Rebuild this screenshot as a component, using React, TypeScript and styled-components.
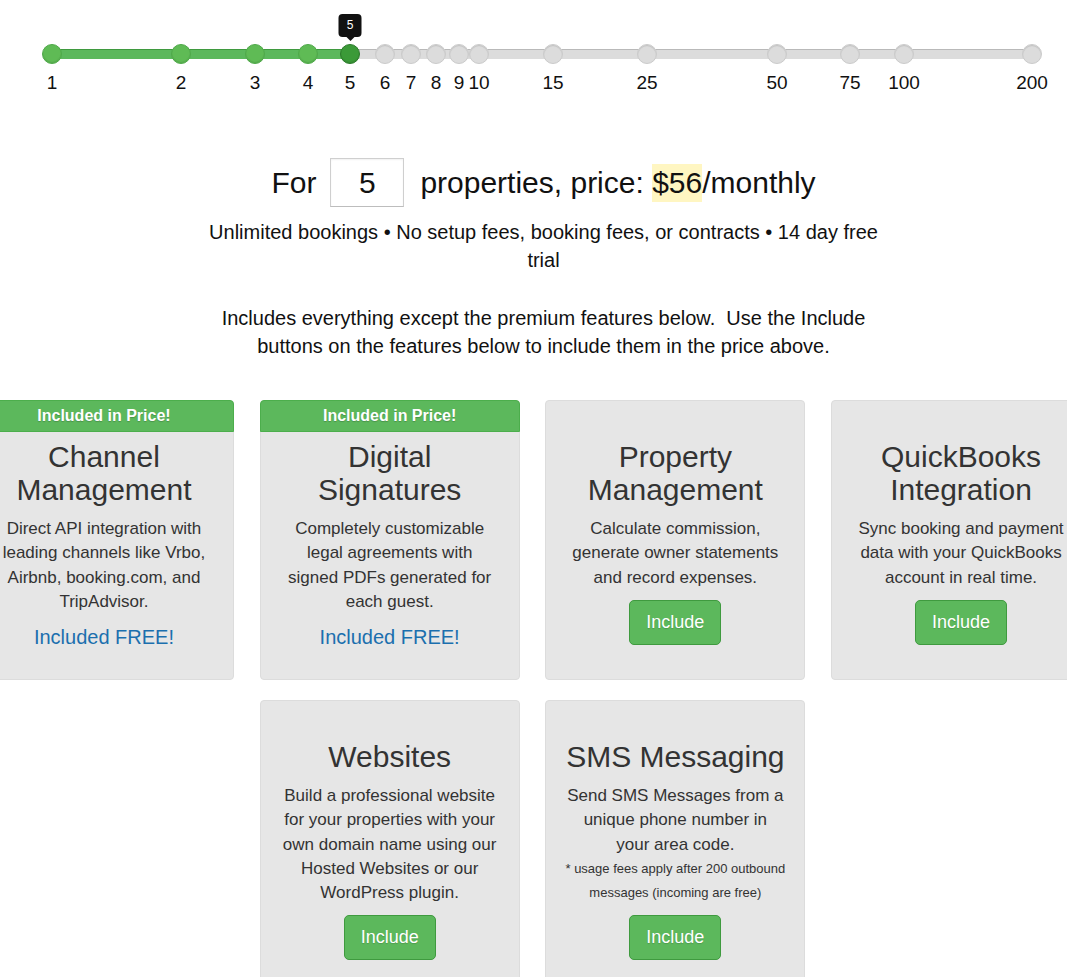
import React from "react";
import styled, { createGlobalStyle } from "styled-components";

const GlobalStyle = createGlobalStyle`
  html, body { margin: 0; padding: 0; background: #fff; overflow-x: hidden; }
  body { font-family: "Liberation Sans", Arial, sans-serif; color: #222; }
  * { box-sizing: border-box; }
`;

const TRACK_LEFT = 52;
const TRACK_RIGHT = 1032;
const TRACK_WIDTH = TRACK_RIGHT - TRACK_LEFT;

const stops: { v: number; x: number }[] = [
  { v: 1, x: 52 },
  { v: 2, x: 181 },
  { v: 3, x: 255 },
  { v: 4, x: 308 },
  { v: 5, x: 350 },
  { v: 6, x: 385 },
  { v: 7, x: 411 },
  { v: 8, x: 436 },
  { v: 9, x: 459 },
  { v: 10, x: 479 },
  { v: 15, x: 553 },
  { v: 25, x: 647 },
  { v: 50, x: 777 },
  { v: 75, x: 850 },
  { v: 100, x: 904 },
  { v: 200, x: 1032 },
];

const SELECTED = 5;

const pct = (x: number) => ((x - TRACK_LEFT) / TRACK_WIDTH) * 100;

const SliderWrap = styled.div`
  width: 1067px;
  padding: 49px ${1067 - TRACK_RIGHT}px 0 ${TRACK_LEFT}px;
`;

const Track = styled.div`
  position: relative;
  height: 10px;
  border-radius: 5px;
  background: #dcdcdc;
  box-shadow: inset 0 1px 0 #b9b9b9;
`;

const Fill = styled.div`
  position: absolute;
  left: 0;
  top: 0;
  bottom: 0;
  border-radius: 5px 0 0 5px;
  background: #5cb85c;
  box-shadow: inset 0 1px 0 #3f9a3f;
`;

const Knob = styled.div<{ $state: "on" | "active" | "off" }>`
  position: absolute;
  top: 50%;
  width: 20px;
  height: 20px;
  margin: -10px 0 0 -10px;
  border-radius: 50%;
  background: ${(p) =>
    p.$state === "active" ? "#3b9a38" : p.$state === "on" ? "#5fbb55" : "#dcdcdc"};
  border: 1px solid
    ${(p) =>
      p.$state === "active" ? "#2b7a2a" : p.$state === "on" ? "#4fa94a" : "#cbcbcb"};
  box-shadow: ${(p) =>
    p.$state === "off" ? "inset 0 1px 1px rgba(0,0,0,0.12)" : "inset 0 -1px 1px rgba(0,0,0,0.1)"};
`;

const Tip = styled.div`
  position: absolute;
  bottom: 26px;
  left: 50%;
  transform: translateX(-50%);
  min-width: 23px;
  height: 23px;
  padding: 0 4px;
  border-radius: 4px;
  background: #111;
  color: #fff;
  font-size: 12px;
  line-height: 23px;
  text-align: center;
  &::after {
    content: "";
    position: absolute;
    left: 50%;
    bottom: -4px;
    margin-left: -4px;
    border-left: 4px solid transparent;
    border-right: 4px solid transparent;
    border-top: 4px solid #111;
  }
`;

const Labels = styled.div`
  position: relative;
  height: 22px;
  margin-top: 13px;
`;

const Label = styled.span`
  position: absolute;
  top: 0;
  transform: translateX(-50%);
  font-size: 19px;
  line-height: 22px;
  color: #111;
  white-space: nowrap;
`;

const Intro = styled.div`
  padding-left: 20px;
  text-align: center;
`;

const PriceRow = styled.div`
  margin-top: 64px;
  display: flex;
  justify-content: center;
  align-items: center;
  font-size: 30px;
  color: #111;
`;

const CountBox = styled.div`
  width: 74px;
  height: 49px;
  margin: 0 16px 0 14px;
  border: 1px solid #cfcfcf;
  border-bottom-color: #bdbdbd;
  background: #fff;
  box-shadow: inset 0 1px 2px rgba(0, 0, 0, 0.06);
  font-size: 30px;
  line-height: 47px;
  text-align: center;
  color: #111;
`;

const Highlight = styled.span`
  background: #fff6c2;
  padding: 2px 0 3px;
`;

const Lead = styled.p<{ $top: number }>`
  max-width: 690px;
  margin: ${(p) => p.$top}px auto 0;
  font-size: 20px;
  line-height: 28px;
  color: #111;
`;

const Grid = styled.div`
  margin-top: 40px;
  display: flex;
  flex-direction: column;
  gap: 20px;
`;

const Row = styled.div`
  display: flex;
  justify-content: center;
  gap: 25.7px;
  padding-right: 2px;
`;

const Card = styled.div`
  position: relative;
  flex: 0 0 260px;
  width: 260px;
  min-height: 280px;
  padding: 39px 20px 26px;
  background: #e6e6e6;
  border: 1px solid #dcdcdc;
  border-radius: 4px;
  text-align: center;
  color: #333;
`;

const Banner = styled.div`
  position: absolute;
  top: -1px;
  left: -1px;
  right: -1px;
  height: 32px;
  border-radius: 4px 4px 0 0;
  background: #5cb85c;
  border: 1px solid #4cae4c;
  color: #fff;
  font-weight: bold;
  font-size: 16px;
  line-height: 29px;
  text-shadow: 0 1px 1px rgba(0, 0, 0, 0.2);
`;

const Title = styled.h3`
  margin: 0 -10px 11px;
  font-size: 30px;
  line-height: 33px;
  font-weight: normal;
  color: #333;
`;

const Desc = styled.p`
  margin: 0;
  font-size: 17px;
  line-height: 24.3px;
  color: #333;
`;

const Note = styled.p`
  margin: 0 -10px;
  font-size: 13px;
  line-height: 24px;
  color: #333;
`;

const Free = styled.div`
  margin-top: 9px;
  font-size: 20px;
  line-height: 28px;
  color: #1b6fae;
`;

const IncludeButton = styled.button`
  margin-top: 10px;
  padding: 9px 16px;
  border: 1px solid #3f9a3f;
  border-radius: 5px;
  background: #5cb85c;
  color: #fff;
  font-family: "Liberation Sans", Arial, sans-serif;
  font-size: 18px;
  line-height: 25px;
  text-shadow: 0 1px 1px rgba(0, 0, 0, 0.15);
  cursor: pointer;
`;

type Feature = {
  title: string[];
  desc: string;
  note?: string;
  included?: boolean;
};

const row1: Feature[] = [
  {
    title: ["Channel", "Management"],
    desc: "Direct API integration with leading channels like Vrbo, Airbnb, booking.com, and TripAdvisor.",
    included: true,
  },
  {
    title: ["Digital", "Signatures"],
    desc: "Completely customizable legal agreements with signed PDFs generated for each guest.",
    included: true,
  },
  {
    title: ["Property", "Management"],
    desc: "Calculate commission, generate owner statements and record expenses.",
  },
  {
    title: ["QuickBooks", "Integration"],
    desc: "Sync booking and payment data with your QuickBooks account in real time.",
  },
];

const row2: Feature[] = [
  {
    title: ["Websites"],
    desc: "Build a professional website for your properties with your own domain name using our Hosted Websites or our WordPress plugin.",
  },
  {
    title: ["SMS Messaging"],
    desc: "Send SMS Messages from a unique phone number in your area code.",
    note: "* usage fees apply after 200 outbound messages (incoming are free)",
  },
];

function FeatureCard({ f }: { f: Feature }) {
  return (
    <Card>
      {f.included && <Banner>Included in Price!</Banner>}
      <Title>
        {f.title.map((t, i) => (
          <React.Fragment key={i}>
            {i > 0 && <br />}
            {t}
          </React.Fragment>
        ))}
      </Title>
      <Desc>{f.desc}</Desc>
      {f.note && <Note>{f.note}</Note>}
      {f.included ? <Free>Included FREE!</Free> : <IncludeButton>Include</IncludeButton>}
    </Card>
  );
}

export default function App() {
  const selX = stops.find((s) => s.v === SELECTED)!.x;
  return (
    <>
      <GlobalStyle />
      <SliderWrap>
        <Track>
          <Fill style={{ width: `${pct(selX)}%` }} />
          {stops.map((s) => (
            <Knob
              key={s.v}
              $state={s.v === SELECTED ? "active" : s.v < SELECTED ? "on" : "off"}
              style={{ left: `${pct(s.x)}%` }}
            >
              {s.v === SELECTED && <Tip>{s.v}</Tip>}
            </Knob>
          ))}
        </Track>
        <Labels>
          {stops.map((s) => (
            <Label key={s.v} style={{ left: `${pct(s.x)}%` }}>
              {s.v}
            </Label>
          ))}
        </Labels>
      </SliderWrap>

      <Intro>
        <PriceRow>
          <span>For</span>
          <CountBox>{SELECTED}</CountBox>
          <span>
            properties, price: <Highlight>$56</Highlight>/monthly
          </span>
        </PriceRow>
        <Lead $top={11}>
          Unlimited bookings • No setup fees, booking fees, or contracts • 14 day free trial
        </Lead>
        <Lead $top={30}>
          Includes everything except the premium features below.{"\u00a0"} Use the Include
          buttons on the features below to include them in the price above.
        </Lead>
      </Intro>

      <Grid>
        <Row>
          {row1.map((f) => (
            <FeatureCard key={f.title.join(" ")} f={f} />
          ))}
        </Row>
        <Row>
          {row2.map((f) => (
            <FeatureCard key={f.title.join(" ")} f={f} />
          ))}
        </Row>
      </Grid>
    </>
  );
}
